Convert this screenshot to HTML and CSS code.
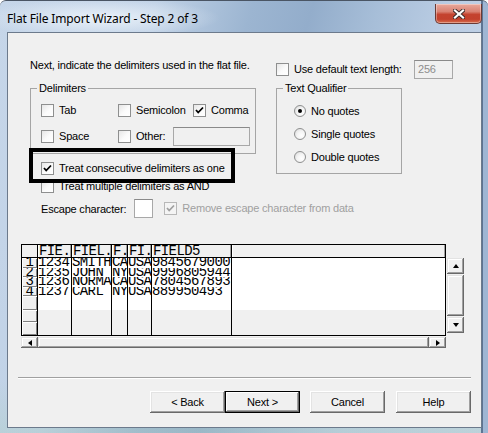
FILE: index.html
```html
<!DOCTYPE html>
<html>
<head>
<meta charset="utf-8">
<link rel="stylesheet" href="styles.css">
</head>
<body>
<div class="window">
  <div class="titlebar">
    <span class="title">Flat File Import Wizard - Step 2 of 3</span>
    <div class="close">
      <svg width="12" height="10" viewBox="0 0 12 10">
        <path d="M2 1.5 L10 8.5 M10 1.5 L2 8.5" stroke="#3b2a2a" stroke-width="4" stroke-linecap="square"/>
        <path d="M2 1.5 L10 8.5 M10 1.5 L2 8.5" stroke="#fff" stroke-width="2.2" stroke-linecap="square"/>
      </svg>
    </div>
  </div>
  <div class="client">
    <div class="top">
      <div class="col-left">
        <div class="intro">Next, indicate the delimiters used in the flat file.</div>
        <div class="group delims">
          <span class="legend">Delimiters</span>
          <div class="delim-grid">
            <div class="chk"><span class="box"></span>Tab</div>
            <div class="chk"><span class="box"></span>Semicolon</div>
            <div class="chk"><span class="box"><svg width="11" height="11" viewBox="0 0 11 11"><path d="M2 5 L4.2 7.5 L9 2.5" fill="none" stroke="#000" stroke-width="1.8"/></svg></span>Comma</div>
            <div class="chk"><span class="box"></span>Space</div>
            <div class="other"><div class="chk"><span class="box"></span>Other:</div><span class="field other-field"></span></div>
          </div>
        </div>
        <div class="chk highlight"><span class="box"><svg width="11" height="11" viewBox="0 0 11 11"><path d="M2 5 L4.2 7.5 L9 2.5" fill="none" stroke="#000" stroke-width="1.8"/></svg></span>Treat consecutive delimiters as one</div>
        <div class="chk multi"><span class="box"></span>Treat multiple delimiters as AND</div>
        <div class="escape">
          <span>Escape character:</span>
          <span class="field esc-field"></span>
          <div class="chk disabled"><span class="box"><svg width="11" height="11" viewBox="0 0 11 11"><path d="M2 5 L4.2 7.5 L9 2.5" fill="none" stroke="#a0a0a0" stroke-width="1.8"/></svg></span>Remove escape character from data</div>
        </div>
      </div>
      <div class="col-right">
        <div class="deflen">
          <div class="chk"><span class="box"></span>Use default text length:</div>
          <span class="field len">256</span>
        </div>
        <div class="group qual">
          <span class="legend">Text Qualifier</span>
          <div class="radio sel"><span class="dot"></span>No quotes</div>
          <div class="radio"><span class="dot"></span>Single quotes</div>
          <div class="radio"><span class="dot"></span>Double quotes</div>
        </div>
      </div>
    </div>

    <div class="preview">
      <div class="grid-col">
        <div class="grid">
          <div class="rh hd"></div><div class="hd">FIE.</div><div class="hd">FIEL.</div><div class="hd">F.</div><div class="hd">FI.</div><div class="hd">FIELD5</div><div class="hd"></div>
          <div class="rh">1</div><div class="d">1234</div><div class="d">SMITH</div><div class="d">CA</div><div class="d">USA</div><div class="d">9845679000</div><div class="d"></div>
          <div class="rh">2</div><div class="d">1235</div><div class="d">JOHN</div><div class="d">NY</div><div class="d">USA</div><div class="d">9996805944</div><div class="d"></div>
          <div class="rh">3</div><div class="d">1236</div><div class="d">NORMA</div><div class="d">CA</div><div class="d">USA</div><div class="d">7804567893</div><div class="d"></div>
          <div class="rh">4</div><div class="d">1237</div><div class="d">CARL</div><div class="d">NY</div><div class="d">USA</div><div class="d">889950493</div><div class="d"></div>
          <div class="rh blank"></div><div class="d"></div><div class="d"></div><div class="d"></div><div class="d"></div><div class="d"></div><div class="d"></div>
          <div class="rh"></div><div class="e"></div><div class="e"></div><div class="e"></div><div class="e"></div><div class="e"></div><div class="e"></div>
          <div class="rh"></div><div class="e"></div><div class="e"></div><div class="e"></div><div class="e"></div><div class="e"></div><div class="e"></div>
        </div>
        <div class="hscroll">
          <div class="sb-btn"><span class="arr left"></span></div>
          <div class="sb-thumb"></div>
          <div class="sb-btn"><span class="arr right"></span></div>
        </div>
      </div>
      <div class="vscroll">
        <div class="sb-btn"><span class="arr up"></span></div>
        <div class="sb-thumb"></div>
        <div class="sb-btn"><span class="arr down"></span></div>
      </div>
    </div>

    <div class="sep"></div>

    <div class="buttons">
      <div class="btn">&lt; Back</div>
      <div class="btn default">Next &gt;</div>
      <div class="btn gap">Cancel</div>
      <div class="btn gap2">Help</div>
    </div>
  </div>
</div>
</body>
</html>
```

FILE: styles.css
```css
* { box-sizing: border-box; }
html, body { margin: 0; padding: 0; }
body {
  width: 488px;
  height: 433px;
  overflow: hidden;
  background: #fff;
  font-family: "Liberation Sans", Arial, sans-serif;
  font-size: 11px;
  letter-spacing: -0.2px;
  color: #000;
}

.window {
  width: 488px;
  height: 433px;
  display: flex;
  flex-direction: column;
  border-top: 1px solid #4a5564;
  border-radius: 6px 6px 0 0;
  background:
    linear-gradient(90deg, rgba(0,0,0,0) 481px, #5d7493 481px, #5d7493 483px, #9fb6d3 483px),
    radial-gradient(ellipse 120px 20px at 100px 17px, rgba(236,243,250,0.95), rgba(236,243,250,0)),
    linear-gradient(180deg, rgba(0,0,0,0) 0, rgba(0,0,0,0) 380px, rgba(170,205,190,0.35) 433px),
    linear-gradient(105deg, #c6d6e9 0%, #bfd1e6 26%, #9cb5d1 42%, #93adcb 52%, #a7bed8 63%, #bccee4 76%, #c6d5e8 100%);
}

.titlebar {
  height: 31px;
  display: flex;
  align-items: flex-start;
  flex: none;
}
.title {
  margin: 10px 0 0 7px;
  font-family: "Noto Sans", "Open Sans", sans-serif;
  font-size: 12px;
  line-height: 16px;
  color: #000;
  letter-spacing: -0.15px;
}
.close {
  margin: 3px 6px 0 auto;
  width: 47px;
  height: 20px;
  border: 1px solid #6b3a34;
  border-top: none;
  border-radius: 0 0 5px 5px;
  background: linear-gradient(180deg, #e9a99c 0%, #d98273 40%, #c4432f 55%, #c2412d 80%, #d86e4c 100%);
  box-shadow: inset 0 0 0 1px rgba(255,255,255,0.35);
  display: flex;
  align-items: center;
  justify-content: center;
}

.client {
  flex: 1;
  margin: 0 6px 5px 7px;
  background: #f0f0f0;
  border: 1px solid #6c7a8c;
  display: flex;
  flex-direction: column;
}

/* top area */
.top {
  display: flex;
  align-items: flex-start;
  padding: 26px 0 0 21px;
}
.col-left {
  width: 227px;
  flex: none;
  display: flex;
  flex-direction: column;
}
.intro {
  height: 13px;
  line-height: 13px;
  padding-left: 1px;
  white-space: nowrap;
}

.group {
  position: relative;
  border: 1px solid #a5a5a5;
}
.legend {
  position: absolute;
  top: -7px;
  left: 6px;
  padding: 0 2px;
  line-height: 13px;
  background: #f0f0f0;
}
.delims {
  margin: 16px 0 0 1px;
  width: 226px;
  height: 66px;
  padding: 8px 0 0 10px;
}
.delim-grid {
  display: grid;
  grid-template-columns: 77px 75px auto;
  grid-auto-rows: 26px;
  align-items: center;
}
.other {
  grid-column: 2 / span 2;
  display: flex;
  align-items: center;
  gap: 8px;
}

.chk {
  display: flex;
  align-items: center;
  gap: 5px;
  white-space: nowrap;
  line-height: 13px;
}
.box {
  width: 13px;
  height: 13px;
  flex: none;
  border: 1px solid #8e8f8f;
  background: linear-gradient(135deg, #e6e6e6 0%, #fbfbfb 55%, #fff 100%);
  display: flex;
  align-items: center;
  justify-content: center;
}
.chk.disabled { color: #a0a0a0; }
.chk.disabled .box { border-color: #b8b8b8; background: #f4f4f4; }

.field {
  height: 19px;
  border: 1px solid #a8a8a8;
  border-top-color: #8a8a8a;
  background: #fff;
  flex: none;
}
.other-field { width: 77px; background: #f0f0f0; }

.highlight {
  position: relative;
  z-index: 1;
  margin: -2px 0 0 4px;
  width: 198px;
  height: 27px;
  padding: 10px 0 0 8px;
  align-items: flex-start;
  outline: 4px solid #000;
}
.multi {
  margin: 1px 0 0 12px;
  height: 13px;
}
.escape {
  margin: 6px 0 0 12px;
  height: 19px;
  display: flex;
  align-items: center;
  white-space: nowrap;
}
.esc-field { width: 19px; margin-left: 8px; }
.escape .chk { margin-left: 11px; }

/* right column */
.col-right {
  margin-left: 20px;
  width: 177px;
  flex: none;
  display: flex;
  flex-direction: column;
}
.deflen {
  margin-top: 1px;
  height: 19px;
  display: flex;
  align-items: center;
}
.len {
  margin-left: auto;
  width: 39px;
  background: #f0f0f0;
  color: #8d8d8d;
  line-height: 17px;
  padding-left: 3px;
}
.qual {
  margin-top: 9px;
  width: 126px;
  height: 86px;
  padding: 10px 0 0 17px;
}
.radio {
  height: 23px;
  display: flex;
  align-items: center;
  gap: 5px;
  white-space: nowrap;
}
.dot {
  width: 12px;
  height: 12px;
  flex: none;
  border-radius: 50%;
  border: 1px solid #8e8f8f;
  background: radial-gradient(circle at 65% 65%, #fff 0%, #f4f4f4 45%, #d6d6d6 100%);
  display: flex;
  align-items: center;
  justify-content: center;
}
.radio.sel .dot::after {
  content: "";
  width: 4px;
  height: 4px;
  border-radius: 50%;
  background: #000;
}

/* preview grid */
.preview {
  margin: 26px 0 0 13px;
  display: flex;
  align-items: flex-start;
  gap: 1px;
}
.grid-col {
  width: 425px;
  display: flex;
  flex-direction: column;
}
.grid {
  display: grid;
  grid-template-columns: 15px 33px 39px 15px 23px 79px 213px;
  grid-template-rows: 13px 9.5px 9.5px 9.5px 9.5px 14px 12px 13px;
  column-gap: 1px;
  border: 1px solid #000;
  background: #000;
  height: 92px;
  font-family: "Liberation Mono", "Courier New", monospace;
  font-size: 14px;
  letter-spacing: -0.6px;
  line-height: 9.5px;
}
.grid > div {
  overflow: hidden;
  white-space: nowrap;
}
.hd {
  background: #f0f0f0;
  border-bottom: 1px solid #000;
  line-height: 12px;
  box-shadow: inset -1px 0 #a0a0a0, inset 1px 0 #fff;
  padding-left: 1px;
}
.d { background: #fff; }
.e { background: #f0f0f0; }
.rh {
  background: #f0f0f0;
  box-shadow: inset 1px 1px #fff, inset -1px -1px #808080;
  text-align: center;
}
.rh.hd { box-shadow: none; }

.hscroll {
  margin-top: 1px;
  height: 11px;
  display: flex;
}
.hscroll .sb-btn { width: 17px; }
.hscroll .sb-thumb { flex: 1; }

.vscroll {
  margin-top: 14px;
  width: 17px;
  height: 75px;
  display: flex;
  flex-direction: column;
  gap: 1px;
}
.vscroll .sb-btn { height: 16px; }
.vscroll .sb-thumb { flex: 1; }

.sb-btn, .sb-thumb {
  background: #f0f0f0;
  box-shadow: inset -1px -1px #696969, inset 1px 1px #e3e3e3, inset -2px -2px #a0a0a0, inset 2px 2px #fff;
  display: flex;
  align-items: center;
  justify-content: center;
  flex: none;
}
.arr { width: 0; height: 0; }
.arr.up { border-left: 3.5px solid transparent; border-right: 3.5px solid transparent; border-bottom: 4px solid #000; }
.arr.down { border-left: 3.5px solid transparent; border-right: 3.5px solid transparent; border-top: 4px solid #000; }
.arr.left { border-top: 3.5px solid transparent; border-bottom: 3.5px solid transparent; border-right: 4px solid #000; }
.arr.right { border-top: 3.5px solid transparent; border-bottom: 3.5px solid transparent; border-left: 4px solid #000; }

/* bottom */
.sep {
  margin: 29px 10px 0 10px;
  height: 2px;
  border-top: 1px solid #a0a0a0;
  border-bottom: 1px solid #fff;
}
.buttons {
  margin-top: 12px;
  padding-right: 10px;
  display: flex;
  justify-content: flex-end;
}
.btn {
  width: 75px;
  height: 22px;
  display: flex;
  align-items: center;
  justify-content: center;
  background: #f0f0f0;
  box-shadow: inset -1px -1px #696969, inset 1px 1px #fff, inset -2px -2px #a0a0a0, inset 2px 2px #e3e3e3;
}
.btn.default {
  border: 1px solid #000;
  box-shadow: inset -1px -1px #696969, inset 1px 1px #fff, inset -2px -2px #a0a0a0;
}
.btn.gap { margin-left: 10px; }
.btn.gap2 { margin-left: 11px; }
```
